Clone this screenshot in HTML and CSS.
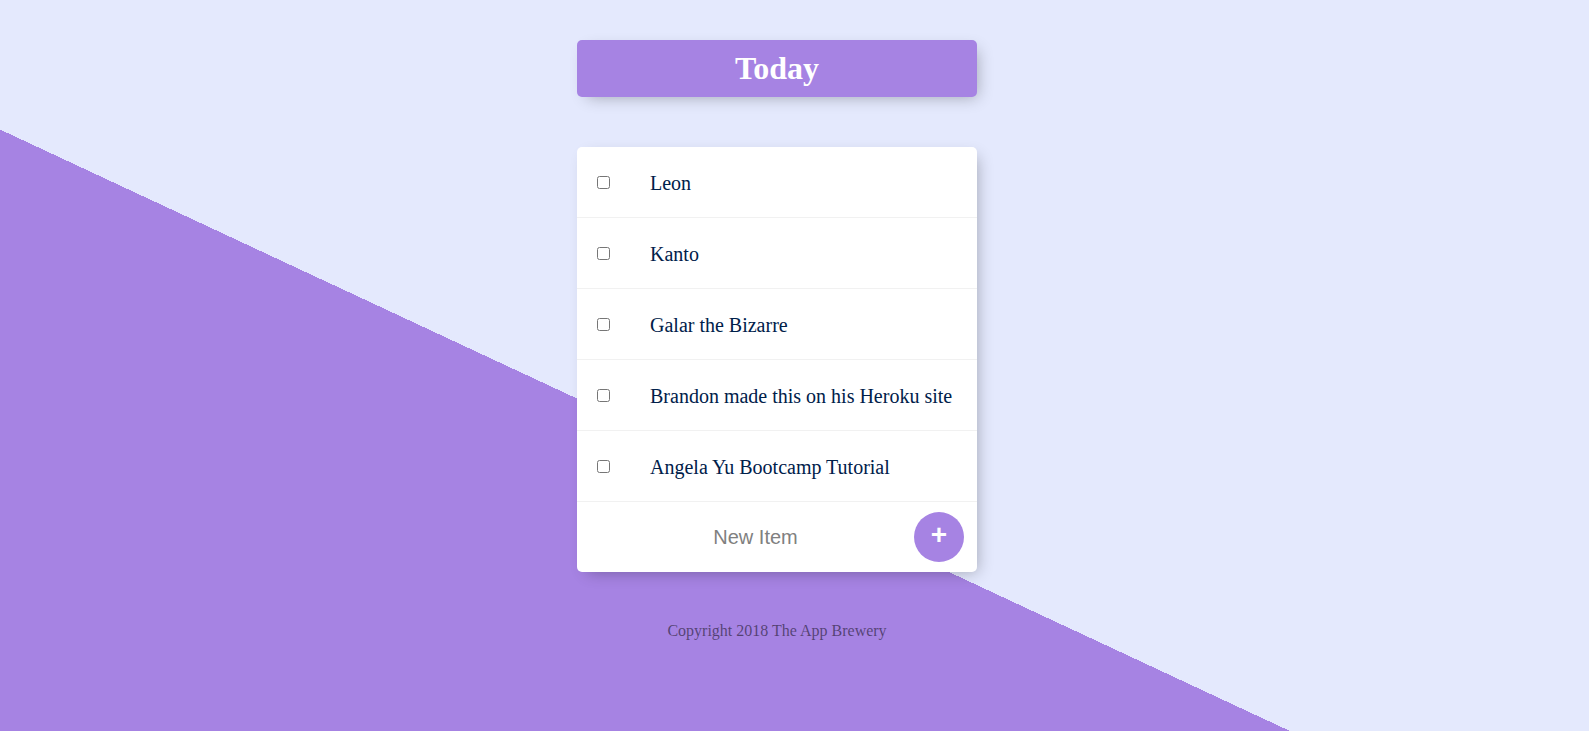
FILE: index.html
```html
<!DOCTYPE html>
<html>
<head>
<meta charset="utf-8">
<title>To Do List</title>
<link rel="stylesheet" href="styles.css">
</head>
<body>
<div class="page">
  <div class="box heading">
    <h1 class="title">Today</h1>
  </div>
  <div class="box">
    <div class="item"><input class="check" type="checkbox"><p class="label">Leon</p></div>
    <div class="item"><input class="check" type="checkbox"><p class="label">Kanto</p></div>
    <div class="item"><input class="check" type="checkbox"><p class="label">Galar the Bizarre</p></div>
    <div class="item"><input class="check" type="checkbox"><p class="label">Brandon made this on his Heroku site</p></div>
    <div class="item"><input class="check" type="checkbox"><p class="label">Angela Yu Bootcamp Tutorial</p></div>
    <form class="item new-form" action="/" method="post">
      <input class="new-input" type="text" name="newItem" placeholder="New Item" autocomplete="off">
      <button class="add-btn" type="submit" name="list" value="Today">+</button>
    </form>
  </div>
  <footer class="footer">Copyright 2018 The App Brewery</footer>
</div>
</body>
</html>
```

FILE: styles.css
```css
html {
  background-color: #E4E9FD;
  background-image: linear-gradient(25deg, #A683E3 50%, #E4E9FD 50%);
  min-height: 1000px;
  font-family: "Liberation Serif", "Times New Roman", serif;
}

body {
  margin: 0;
}

.page {
  width: 1554px;
  padding-top: 40px;
}

.box {
  width: 400px;
  margin: 0 auto 50px;
  background: #fff;
  border-radius: 5px;
  box-shadow: 5px 5px 15px -5px rgba(0, 0, 0, 0.3);
}

.heading {
  background-color: #A683E3;
  text-align: center;
}

.title {
  margin: 0;
  padding: 10px;
  color: #fff;
  font-size: 32px;
  font-weight: bold;
}

.item {
  min-height: 70px;
  display: flex;
  align-items: center;
  border-bottom: 1px solid #F1F1F1;
}

.item:last-child {
  border-bottom: 0;
}

.check {
  margin: 20px;
  width: 13px;
  height: 13px;
}

.label {
  margin: 0;
  padding: 21px 20px 19px;
  font-size: 20px;
  font-weight: 200;
  color: #00204a;
}

.new-form {
  margin: 0 0 0 20px;
}

.new-input {
  text-align: center;
  height: 60px;
  border: none;
  padding: 1px 2px;
  font-family: "Liberation Sans", Arial, sans-serif;
  font-size: 20px;
  font-weight: 200;
  width: 313px;
  background: transparent;
}

.new-input::placeholder {
  color: grey;
  opacity: 1;
}

.new-input:focus {
  outline: none;
}

.add-btn {
  min-height: 50px;
  width: 50px;
  border-radius: 50%;
  border: 0;
  background-color: #A683E3;
  color: #fff;
  font-family: "Liberation Sans", Arial, sans-serif;
  font-size: 28px;
  font-weight: bold;
  padding: 0 0 4px;
  line-height: 1;
}

.footer {
  color: rgba(0, 0, 0, 0.5);
  text-align: center;
  font-size: 16px;
}
```
